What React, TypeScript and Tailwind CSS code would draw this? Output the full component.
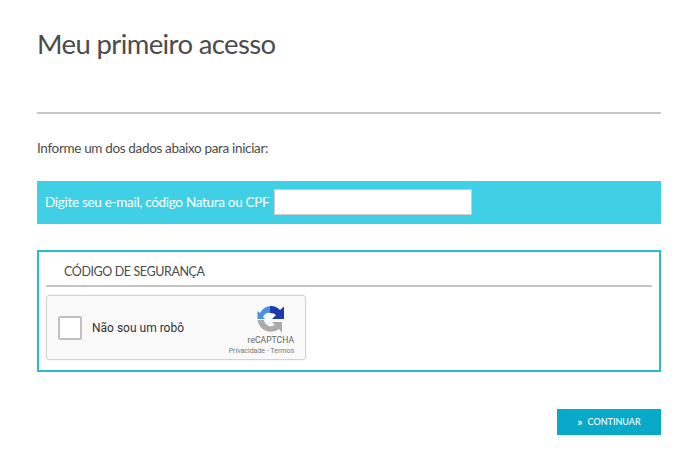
export default function App() {
  return (
    <div className="w-[700px] h-[456px] bg-white overflow-hidden pl-[37px] pr-[39px] font-['Lato','Open_Sans',sans-serif] text-[#4c4c4c]">
      <h1 className="pt-[26px] h-[114px] text-[27.5px] leading-[36px] tracking-[-0.62px] font-normal border-b-2 border-[#c8c8c8]">Meu primeiro acesso</h1>
      <p className="mt-[24px] text-[13.5px] leading-[20px] font-normal tracking-[-0.34px]">Informe um dos dados abaixo para iniciar:</p>
      <div className="mt-[23px] h-[43px] bg-[#3fd0e6] flex items-center pl-[8px] gap-[5px] pb-[2px]">
        <span className="text-white text-[13.5px] tracking-[-0.3px] mt-[1px]">Digite seu e-mail, código Natura ou CPF</span>
        <input className="w-[198px] h-[26px] bg-white border border-[#c9ccd0] outline-none" aria-label="Digite seu e-mail, código Natura ou CPF" />
      </div>
      <section className="mt-[26px] h-[122px] border-2 border-[#2bbcc9] pt-[8px] px-[7px]">
        <div className="h-[27px] pl-[18px] border-b-2 border-[#c4c4c4] text-[12.5px] leading-[24px] tracking-[-0.4px]">CÓDIGO DE SEGURANÇA</div>
        <div className="mt-[8px] w-[260px] h-[65px] bg-[#f9f9f9] border border-[#d3d3d3] rounded-[3px] shadow-[0_0_3px_rgba(0,0,0,0.08)] flex items-center pl-[11px] pr-[11px] font-['Roboto',sans-serif]">
          <div className="w-[24px] h-[24px] bg-white border-2 border-[#c1c1c1] rounded-[2px]" />
          <span className="ml-[10px] text-[12px] text-[#333]">Não sou um robô</span>
          <div className="ml-auto flex flex-col items-end pt-[8px]">
            <svg className="mr-[10px]" width="27" height="27" viewBox="0 0 27 27">
              <path d="M15 0 A13.5 13.5 0 0 0 3 7 L0.5 5 L0.5 13 L8 13 L6 11 A7 7 0 0 1 14 7 Z" fill="#4a90e2" />
              <path d="M13 0 A13.5 13.5 0 0 1 23 4 L27 0.5 L27 13 L15 13 L19 9 A7 7 0 0 0 13 7 Z" fill="#1c3aa9" />
              <path d="M0.5 14 L7 14 A7 7 0 0 0 18 19 L15 16 L25 16 L25 27 L22 23 A13.5 13.5 0 0 1 0.5 14 Z" fill="#ababab" />
            </svg>
            <div className="mt-[2px] text-[8.6px] leading-[11px] text-[#666]">reCAPTCHA</div>
            <div className="text-[7px] leading-[11px] text-[#777] whitespace-nowrap">Privacidade - Termos</div>
          </div>
        </div>
      </section>
      <div className="mt-[37px] flex justify-end">
        <button className="w-[104px] h-[26px] bg-[#09aac9] text-white text-[9px] font-medium flex items-center justify-center gap-[5px]">
          <span className="text-[12px] leading-[12px]">»</span>
          <span>CONTINUAR</span>
        </button>
      </div>
    </div>
  );
}
